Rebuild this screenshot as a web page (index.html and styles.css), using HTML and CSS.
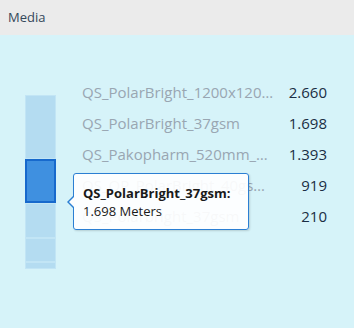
FILE: index.html
```html
<!DOCTYPE html>
<html lang="en">
<head>
  <meta charset="UTF-8">
  <meta name="viewport" content="width=device-width, initial-scale=1.0">
  <title>Media</title>
  <link rel="stylesheet" href="styles.css">
</head>
<body>
  <header class="panel-title">Media</header>

  <div class="panel-body">
    <div class="stack-bar">
      <div class="segment" style="height: 64px"></div>
      <div class="segment active" style="height: 44px"></div>
      <div class="segment" style="height: 35px"></div>
      <div class="segment" style="height: 24px"></div>
      <div class="segment" style="height: 7px"></div>
    </div>

    <div class="legend">
      <div class="legend-label">QS_PolarBright_1200x1200mm_37gsm</div>
      <div class="legend-value">2.660</div>
      <div class="legend-label">QS_PolarBright_37gsm</div>
      <div class="legend-value">1.698</div>
      <div class="legend-label">QS_Pakopharm_520mm_Wide</div>
      <div class="legend-value">1.393</div>
      <div class="legend-label">QS_OP_PolarBright_40gsm_roll</div>
      <div class="legend-value">919</div>
      <div class="legend-label">QS_Polarbright_37gsm</div>
      <div class="legend-value">210</div>
    </div>

    <div class="tooltip">
      <div class="tooltip-name">QS_PolarBright_37gsm:</div>
      <div class="tooltip-value">1.698 Meters</div>
    </div>
  </div>
</body>
</html>
```

FILE: styles.css
```css
body {
  margin: 0;
  font-family: 'Open Sans', 'Noto Sans', sans-serif;
  background-color: #d6f3f9;
  width: 354px;
  height: 328px;
  overflow: hidden;
}
.panel-title {
  background-color: #ebebeb;
  color: #34475a;
  font-size: 13px;
  height: 35px;
  line-height: 35px;
  padding-left: 8px;
  box-sizing: border-box;
}
.panel-body {
  position: relative;
  display: flex;
  align-items: flex-start;
  height: 293px;
}
.stack-bar {
  display: flex;
  flex-direction: column;
  width: 31px;
  margin-top: 60px;
  margin-left: 25px;
}
.segment {
  background-color: #b4dcf1;
  border: 1px solid #c2e5f5;
  box-sizing: border-box;
}
.segment.active {
  background-color: #3f90e0;
  border: 2px solid #1769cc;
}
.legend {
  display: grid;
  grid-template-columns: 198px 47px;
  grid-auto-rows: 31px;
  align-items: center;
  margin-top: 41px;
  margin-left: 26px;
  font-size: 15px;
}
.legend-label {
  color: #99a6b2;
  white-space: nowrap;
  overflow: hidden;
  text-overflow: ellipsis;
  padding-right: 6px;
}
.legend-value {
  color: #1a2e44;
  text-align: right;
}
.tooltip {
  position: absolute;
  left: 73px;
  top: 138px;
  width: 176px;
  height: 57px;
  box-sizing: border-box;
  padding: 10px 0 0 9px;
  background-color: rgba(255, 255, 255, 0.92);
  border: 1px solid #2b7fd3;
  border-radius: 3px;
  box-shadow: 1px 1px 2px rgba(0, 0, 0, 0.15);
  color: #1a1a1a;
  font-size: 13px;
  line-height: 18px;
}
.tooltip::before {
  content: '';
  position: absolute;
  left: -7px;
  top: 21px;
  border-top: 7px solid transparent;
  border-bottom: 7px solid transparent;
  border-right: 7px solid #2b7fd3;
}
.tooltip::after {
  content: '';
  position: absolute;
  left: -5px;
  top: 22px;
  border-top: 6px solid transparent;
  border-bottom: 6px solid transparent;
  border-right: 6px solid #fcfdfd;
}
.tooltip-name {
  font-weight: bold;
}
```
